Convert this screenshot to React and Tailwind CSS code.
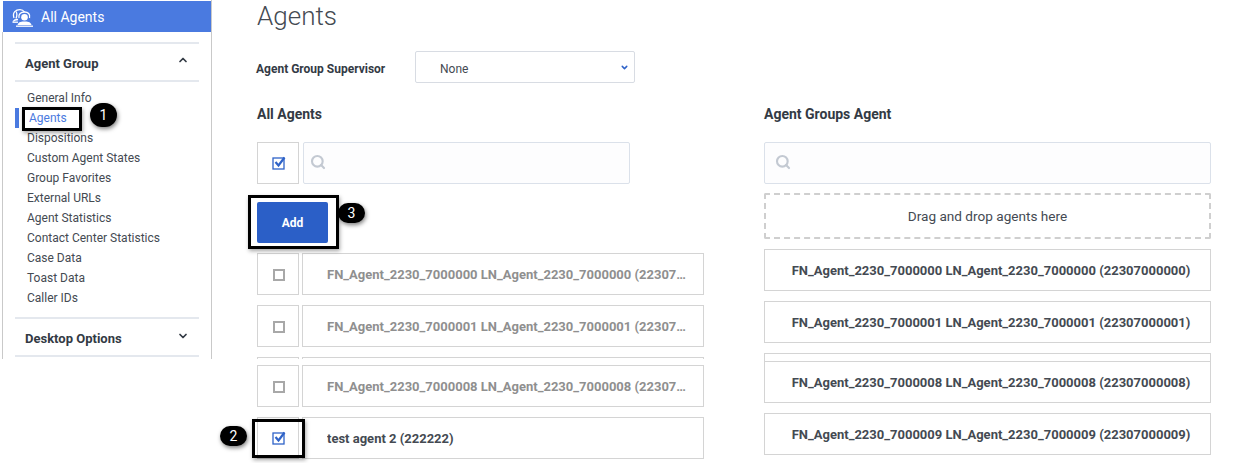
import { ChevronDown, ChevronUp, Search } from 'lucide-react';

const font = { fontFamily: 'Roboto, sans-serif' };

const navItems = [
  'General Info',
  'Agents',
  'Dispositions',
  'Custom Agent States',
  'Group Favorites',
  'External URLs',
  'Agent Statistics',
  'Contact Center Statistics',
  'Case Data',
  'Toast Data',
  'Caller IDs',
];

// two agents with headsets, one behind the other
const AgentsIcon = () => (
  <svg width="21" height="18" viewBox="0 0 21 18" fill="none" stroke="white" strokeWidth="1.300">
    <path d="M2 9 C0 3 4 0.700 8 0.700 C10 0.700 11.500 1.500 12.500 3" />
    <path d="M4 2.500 C5 4 5 7 4 9.500" />
    <path d="M1 12.500 C2 11 4 10.500 6 10.500" />
    <path d="M0.500 13.200 H6" />
    <path d="M7 9 C6 5 9 3 12.500 3 C16 3 18.500 5 17.500 9" />
    <circle cx="12.500" cy="8.200" r="3.300" fill="white" stroke="none" />
    <path d="M5.500 16 C6.500 12.500 10 12.500 12.500 12.500 C15 12.500 18.500 12.500 19.500 16 Z" fill="white" stroke="none" />
    <path d="M4 17.200 H21" />
  </svg>
);

const Checkbox = ({ checked }) => (
  <div className={`w-[42px] h-[42px] shrink-0 border border-[#d4d4d4] flex items-center justify-center pl-px ${checked ? '' : 'pt-px'}`}>
    {checked ? (
      <svg width="14" height="14" viewBox="0 0 14 14" fill="none">
        <rect x="1" y="2" width="11" height="11" stroke="#2f63c8" strokeWidth="1.300" />
        <path d="M3.500 6 L6.500 9.500 L12.500 1.500" stroke="#2f63c8" strokeWidth="2.200" />
      </svg>
    ) : (
      <div className="w-[12px] h-[12px] border-2 border-[#a8a8a8]" />
    )}
  </div>
);

const SearchBox = ({ className }) => (
  <div className={`h-[42px] border border-[#dbe1ea] rounded-[2px] bg-[#fdfdfe] flex items-center pb-[2px] ${className}`}>
    <Search size={16} strokeWidth={3.200} className="text-[#c3c9d2]" />
  </div>
);

const LeftRow = ({ label, checked, dark }) => (
  <div className="flex gap-[3px] h-[42px]">
    <Checkbox checked={checked} />
    <div className="flex-1 min-w-0 border border-[#d4d4d4] flex items-center pl-[24px] pr-[15px] pt-px">
      <span className={`truncate text-[13px] font-bold ${dark ? 'text-[#444a52]' : 'text-[#8f8f8f]'}`}>{label}</span>
    </div>
  </div>
);

const RightRow = ({ label }) => (
  <div className="h-[42px] border border-[#d4d4d4] flex items-center justify-center pl-[7px] pt-[2px] text-[13px] font-bold text-[#444a52] bg-white">
    {label}
  </div>
);

const Badge = ({ children, className }) => (
  <div className={`absolute w-[27px] rounded-full bg-black text-white text-[14px] flex items-center justify-center shadow-[1px_2px_4px_rgba(0,0,0,0.5)] ${className}`}>
    {children}
  </div>
);

const Highlight = ({ className }) => (
  <div className={`absolute border-[3px] border-black shadow-[1px_2px_4px_rgba(0,0,0,0.35)] ${className}`} />
);

const Sidebar = () => (
  <aside className="w-[209px] ml-[3px] h-[359px] shrink-0 border-r border-[#c9c9c9] relative">
    <div className="absolute -left-px top-[32px] bottom-0 w-px bg-[#c9c9c9]" />
    <div className="h-[31px] mt-px bg-[#4a7ae0] flex items-center pl-[9px] pt-[2px] gap-[8px] text-white text-[14px]">
      <AgentsIcon />
      <span>All Agents</span>
    </div>
    <div className="mx-[12px] mt-[10px] w-[184px] border-y-2 border-[#e4e8ee] h-[40px] px-[10px] pt-[4px] flex items-center justify-between">
      <span className="text-[13px] font-bold text-[#333a44]">Agent Group</span>
      <ChevronUp size={12} strokeWidth={3.500} className="text-[#333a44] -translate-y-[4px]" />
    </div>
    <ul className="mt-[6px] text-[12px] text-[#444a52]">
      {navItems.map(item => (
        <li key={item} className="h-[20px] leading-[20px] relative pl-[24px]">
          {item === 'Agents' ? (
            <>
              <span className="absolute left-[12px] top-0 w-[4px] h-[20px] bg-[#4a7ae0]" />
              <span className="text-[#4a7ae0] pl-[2px]">{item}</span>
            </>
          ) : (
            item
          )}
        </li>
      ))}
    </ul>
    <div className="mx-[12px] mt-[9px] w-[184px] border-y-2 border-[#e4e8ee] h-[40px] px-[10px] pt-[4px] flex items-center justify-between">
      <span className="text-[13px] font-bold text-[#333a44]">Desktop Options</span>
      <ChevronDown size={12} strokeWidth={3.500} className="text-[#333a44] -translate-y-[3px]" />
    </div>
  </aside>
);

const App = () => {
  return (
    <div className="relative w-[1241px] h-[463px] overflow-hidden bg-white flex" style={font}>
      <Sidebar />
      <main className="ml-[45px] w-[954px] shrink-0">
        <h1 className="text-[26px] font-light text-[#444a52] leading-[32px]">Agents</h1>
        <div className="flex items-center mt-[19px] h-[32px]">
          <label className="w-[159px] -ml-[1px] pt-[4px] text-[12px] font-bold text-[#333a44]">Agent Group Supervisor</label>
          <div className="w-[220px] h-[32px] border border-[#d8dce3] rounded-[2px] flex items-center justify-between pl-[24px] pr-[5px] pt-[4px] text-[12px] text-[#444a52]">
            <span>None</span>
            <ChevronDown size={9} strokeWidth={4} className="text-[#2f63c8] -translate-y-[2px]" />
          </div>
        </div>
        <div className="flex gap-[60px] mt-[22px]">
          <section className="w-[447px]">
            <h2 className="text-[14px] font-bold text-[#333a44] leading-[18px]">All Agents</h2>
            <div className="flex gap-[4px] mt-[19px]">
              <Checkbox checked />
              <SearchBox className="w-[327px] pl-[6px]" />
            </div>
            <button className="block mt-[18px] w-[71px] h-[41px] rounded-[2px] bg-[#2b5fc7] text-white text-[12px] font-bold">
              Add
            </button>
            <div className="mt-[10px] flex flex-col gap-[10px]">
              <LeftRow label="FN_Agent_2230_7000000 LN_Agent_2230_7000000 (22307000000)" />
              <LeftRow label="FN_Agent_2230_7000001 LN_Agent_2230_7000001 (22307000001)" />
              <div className="h-[2px] -mb-[4px] flex gap-[3px]">
                <div className="w-[42px] border-t border-x border-[#d4d4d4]" />
                <div className="flex-1 border-t border-x border-[#d4d4d4]" />
              </div>
              <LeftRow label="FN_Agent_2230_7000008 LN_Agent_2230_7000008 (22307000008)" />
              <LeftRow label="test agent 2 (222222)" checked dark />
            </div>
          </section>
          <section className="w-[447px]">
            <h2 className="text-[14px] font-bold text-[#333a44] leading-[18px]">Agent Groups Agent</h2>
            <SearchBox className="mt-[19px] w-full pl-[10px]" />
            <div className="mt-[9px] h-[46px] border-2 border-dashed border-[#cfcfcf] rounded-[2px] flex items-center justify-center text-[13.600px] text-[#444a52]">
              Drag and drop agents here
            </div>
            <div className="mt-[10px] flex flex-col gap-[10px]">
              <RightRow label="FN_Agent_2230_7000000 LN_Agent_2230_7000000 (22307000000)" />
              <RightRow label="FN_Agent_2230_7000001 LN_Agent_2230_7000001 (22307000001)" />
              <div className="h-[8px] -mb-[10px] border-t border-x border-[#d4d4d4]" />
              <RightRow label="FN_Agent_2230_7000008 LN_Agent_2230_7000008 (22307000008)" />
              <RightRow label="FN_Agent_2230_7000009 LN_Agent_2230_7000009 (22307000009)" />
            </div>
          </section>
        </div>
      </main>

      <Highlight className="left-[22px] top-[107px] w-[60px] h-[24px]" />
      <Badge className="left-[90px] top-[103px] h-[24px]">1</Badge>
      <Highlight className="left-[252px] top-[419px] w-[53px] h-[39px]" />
      <Badge className="left-[220px] top-[426px] h-[20px]">2</Badge>
      <Highlight className="left-[248px] top-[195px] w-[91px] h-[54px]" />
      <Badge className="left-[338px] top-[203px] h-[20px]">3</Badge>
    </div>
  );
};

export default App;
